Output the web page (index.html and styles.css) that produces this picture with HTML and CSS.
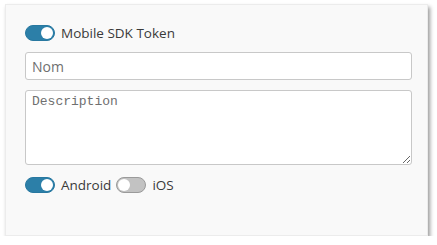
FILE: index.html
```html
<!DOCTYPE html>
<html>
<head>
<meta charset="utf-8">
<link rel="stylesheet" href="styles.css">
</head>
<body>
<div class="card">
  <label class="switch-row">
    <span class="switch on"><span class="knob"></span></span>
    <span class="label">Mobile SDK Token</span>
  </label>
  <input class="field" type="text" placeholder="Nom">
  <textarea class="area" placeholder="Description"></textarea>
  <div class="platforms">
    <label class="switch-row">
      <span class="switch on"><span class="knob"></span></span>
      <span class="label">Android</span>
    </label>
    <label class="switch-row">
      <span class="switch off"><span class="knob"></span></span>
      <span class="label">iOS</span>
    </label>
  </div>
</div>
</body>
</html>
```

FILE: styles.css
```css
html, body {
  margin: 0;
  padding: 0;
  background: #ffffff;
}
body {
  font-family: "Open Sans", "Noto Sans", sans-serif;
  font-size: 13px;
  color: #333;
}
.card {
  box-sizing: border-box;
  margin: 4px 0 0 5px;
  width: 423px;
  height: 232px;
  background: #f9f9f9;
  border: 1px solid #ececec;
  box-shadow: 2px 3px 4px rgba(0,0,0,0.4);
  padding: 19px 16px 0 19px;
  display: flex;
  flex-direction: column;
}
.switch-row {
  display: flex;
  align-items: center;
  gap: 6px;
  height: 18px;
}
.switch {
  box-sizing: border-box;
  position: relative;
  width: 30px;
  height: 16px;
  border-radius: 8px;
  display: inline-block;
  flex: none;
}
.switch.on {
  background: #2c7fa8;
  border: 1px solid #2878a0;
}
.switch.off {
  background: #c2c2c2;
  border: 1px solid #9a9a9a;
}
.knob {
  position: absolute;
  top: 1px;
  width: 12px;
  height: 12px;
  border-radius: 50%;
  background: #fff;
}
.switch.on .knob { right: 1px; }
.switch.off .knob { left: 1px; }
.label {
  font-size: 13.5px;
  color: #3a3a3a;
  line-height: 18px;
}
.field, .area {
  box-sizing: border-box;
  width: 387px;
  border: 1px solid #c8c8c8;
  border-radius: 3px;
  background: #fff;
  margin: 0;
  outline: none;
}
.field {
  margin-top: 10px;
  height: 28px;
  padding: 0 6px;
  font-family: "Open Sans", "Noto Sans", sans-serif;
  font-size: 14px;
}
.field::placeholder { color: #6f6f6f; }
.area {
  margin-top: 10px;
  height: 75px;
  padding: 3px 6px;
  font-family: "Liberation Mono", "DejaVu Sans Mono", monospace;
  font-size: 13px;
  resize: vertical;
  display: block;
}
.area::placeholder { color: #6f6f6f; }
.platforms {
  margin-top: 11px;
  display: flex;
  gap: 5px;
}
```
